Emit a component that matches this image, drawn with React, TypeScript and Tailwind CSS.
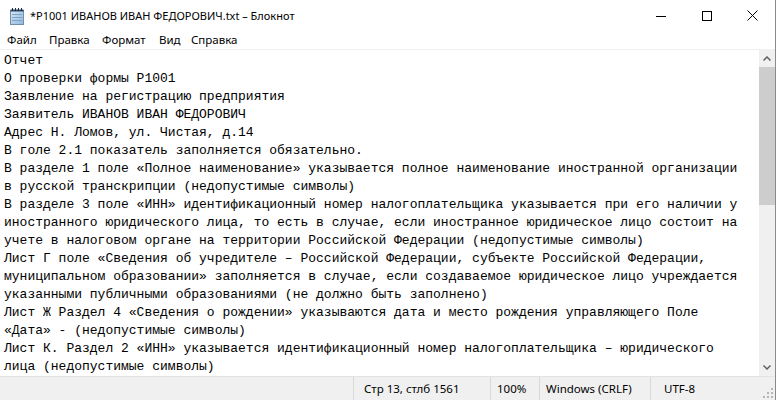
import React from "react";

const lines = [
  "Отчет",
  "О проверки формы Р1001",
  "Заявление на регистрацию предприятия",
  "Заявитель ИВАНОВ ИВАН ФЕДОРОВИЧ",
  "Адрес Н. Ломов, ул. Чистая, д.14",
  "В голе 2.1 показатель заполняется обязательно.",
  "В разделе 1 поле «Полное наименование» указывается полное наименование иностранной организации",
  "в русской транскрипции (недопустимые символы)",
  "В разделе 3 поле «ИНН» идентификационный номер налогоплательщика указывается при его наличии у",
  "иностранного юридического лица, то есть в случае, если иностранное юридическое лицо состоит на",
  "учете в налоговом органе на территории Российской Федерации (недопустимые символы)",
  "Лист Г поле «Сведения об учредителе – Российской Федерации, субъекте Российской Федерации,",
  "муниципальном образовании» заполняется в случае, если создаваемое юридическое лицо учреждается",
  "указанными публичными образованиями (не должно быть заполнено)",
  "Лист Ж Раздел 4 «Сведения о рождении» указываются дата и место рождения управляющего Поле",
  "«Дата» - (недопустимые символы)",
  "Лист К. Раздел 2 «ИНН» указывается идентификационный номер налогоплательщика – юридического",
  "лица (недопустимые символы)",
];

const uiFont = { fontFamily: '"Noto Sans", "Open Sans", sans-serif' };

function NotepadIcon() {
  return (
    <svg width="14" height="17" viewBox="0 0 14 17">
      <defs>
        <linearGradient id="np" x1="0" y1="0" x2="1" y2="1">
          <stop offset="0" stopColor="#d7e8f7" />
          <stop offset="1" stopColor="#8fb6da" />
        </linearGradient>
      </defs>
      <rect x="0.5" y="2.5" width="13" height="14" fill="url(#np)" stroke="#6f8fae" />
      <rect x="0.5" y="1.5" width="13" height="2" fill="#2f4a66" />
      <g stroke="#1d2c3c" strokeWidth="1">
        <line x1="2.5" y1="0" x2="2.5" y2="3" />
        <line x1="5.5" y1="0" x2="5.5" y2="3" />
        <line x1="8.5" y1="0" x2="8.5" y2="3" />
        <line x1="11.5" y1="0" x2="11.5" y2="3" />
      </g>
      <g stroke="#7ea3c6" strokeWidth="1">
        <line x1="2" y1="6.5" x2="12" y2="6.5" />
        <line x1="2" y1="9.5" x2="12" y2="9.5" />
        <line x1="2" y1="12.5" x2="12" y2="12.5" />
      </g>
    </svg>
  );
}

export default function App() {
  return (
    <div className="w-[776px] h-[400px] bg-white flex flex-col border-r border-[#8a8a8a] overflow-hidden">
      {/* Title bar */}
      <div className="h-[31px] flex items-center shrink-0">
        <div className="pl-[10px] pr-[6px] flex items-center pt-[1px]">
          <NotepadIcon />
        </div>
        <div className="text-[11px] text-black whitespace-pre leading-none" style={uiFont}>
          *Р1001 ИВАНОВ ИВАН ФЕДОРОВИЧ.txt – Блокнот
        </div>
        <div className="ml-auto flex h-full">
          <div className="w-[46px] h-full flex items-center justify-center">
            <svg width="10" height="10" viewBox="0 0 10 10">
              <line x1="0" y1="5.5" x2="10" y2="5.5" stroke="#000" strokeWidth="1" />
            </svg>
          </div>
          <div className="w-[46px] h-full flex items-center justify-center">
            <svg width="10" height="10" viewBox="0 0 10 10">
              <rect x="0.5" y="0.5" width="9" height="9" fill="none" stroke="#000" strokeWidth="1" />
            </svg>
          </div>
          <div className="w-[45px] h-full flex items-center justify-center">
            <svg width="11" height="11" viewBox="0 0 11 11">
              <path d="M0.5 0.5 L10.5 10.5 M10.5 0.5 L0.5 10.5" stroke="#000" strokeWidth="1" />
            </svg>
          </div>
        </div>
      </div>

      {/* Menu bar */}
      <div className="h-[19px] flex items-center text-[11.5px] text-black border-b border-[#f0f0f0] shrink-0" style={uiFont}>
        <span className="w-[49px] pl-[7px]">Файл</span>
        <span className="w-[53px]">Правка</span>
        <span className="w-[57px]">Формат</span>
        <span className="w-[32px]">Вид</span>
        <span>Справка</span>
      </div>

      {/* Editor area */}
      <div className="flex flex-1 min-h-0">
        <div
          className="flex-1 pl-[4px] pt-[2px] text-[13px] leading-[18px] text-black overflow-hidden"
          style={{ fontFamily: '"Liberation Mono", "DejaVu Sans Mono", monospace' }}
        >
          {lines.map((l, i) => (
            <div key={i} className="whitespace-pre h-[18px]">
              {l}
            </div>
          ))}
        </div>
        {/* Scrollbar */}
        <div className="w-[16px] bg-[#f0f0f0] flex flex-col">
          <div className="h-[17px] flex items-center justify-center">
            <svg width="8" height="5" viewBox="0 0 8 5">
              <path d="M0.5 4.5 L4 1 L7.5 4.5" fill="none" stroke="#606060" strokeWidth="1.5" />
            </svg>
          </div>
          <div className="h-[138px] bg-[#cdcdcd]" />
          <div className="flex-1" />
          <div className="h-[17px] flex items-center justify-center">
            <svg width="8" height="5" viewBox="0 0 8 5">
              <path d="M0.5 0.5 L4 4 L7.5 0.5" fill="none" stroke="#606060" strokeWidth="1.5" />
            </svg>
          </div>
        </div>
      </div>

      {/* Status bar */}
      <div className="h-[24px] shrink-0 bg-[#f0f0f0] border-t border-[#e3e3e3] flex items-center text-[11.5px] text-black" style={uiFont}>
        <div className="w-[353px] h-full" />
        <div className="w-[137px] h-full border-l border-[#d9d9d9] pl-[10px] flex items-center">Стр 13, стлб 1561</div>
        <div className="w-[49px] h-full border-l border-[#d9d9d9] pl-[6px] flex items-center">100%</div>
        <div className="w-[111px] h-full border-l border-[#d9d9d9] pl-[6px] flex items-center">Windows (CRLF)</div>
        <div className="flex-1 h-full border-l border-[#d9d9d9] pl-[13px] flex items-center">UTF-8</div>
        <div className="w-[14px] h-full relative">
          <svg className="absolute right-[2px] bottom-[2px]" width="10" height="10" viewBox="0 0 10 10">
            <g fill="#b5b5b5">
              <rect x="8" y="0" width="2" height="2" />
              <rect x="4" y="4" width="2" height="2" />
              <rect x="8" y="4" width="2" height="2" />
              <rect x="0" y="8" width="2" height="2" />
              <rect x="4" y="8" width="2" height="2" />
              <rect x="8" y="8" width="2" height="2" />
            </g>
          </svg>
        </div>
      </div>
    </div>
  );
}
